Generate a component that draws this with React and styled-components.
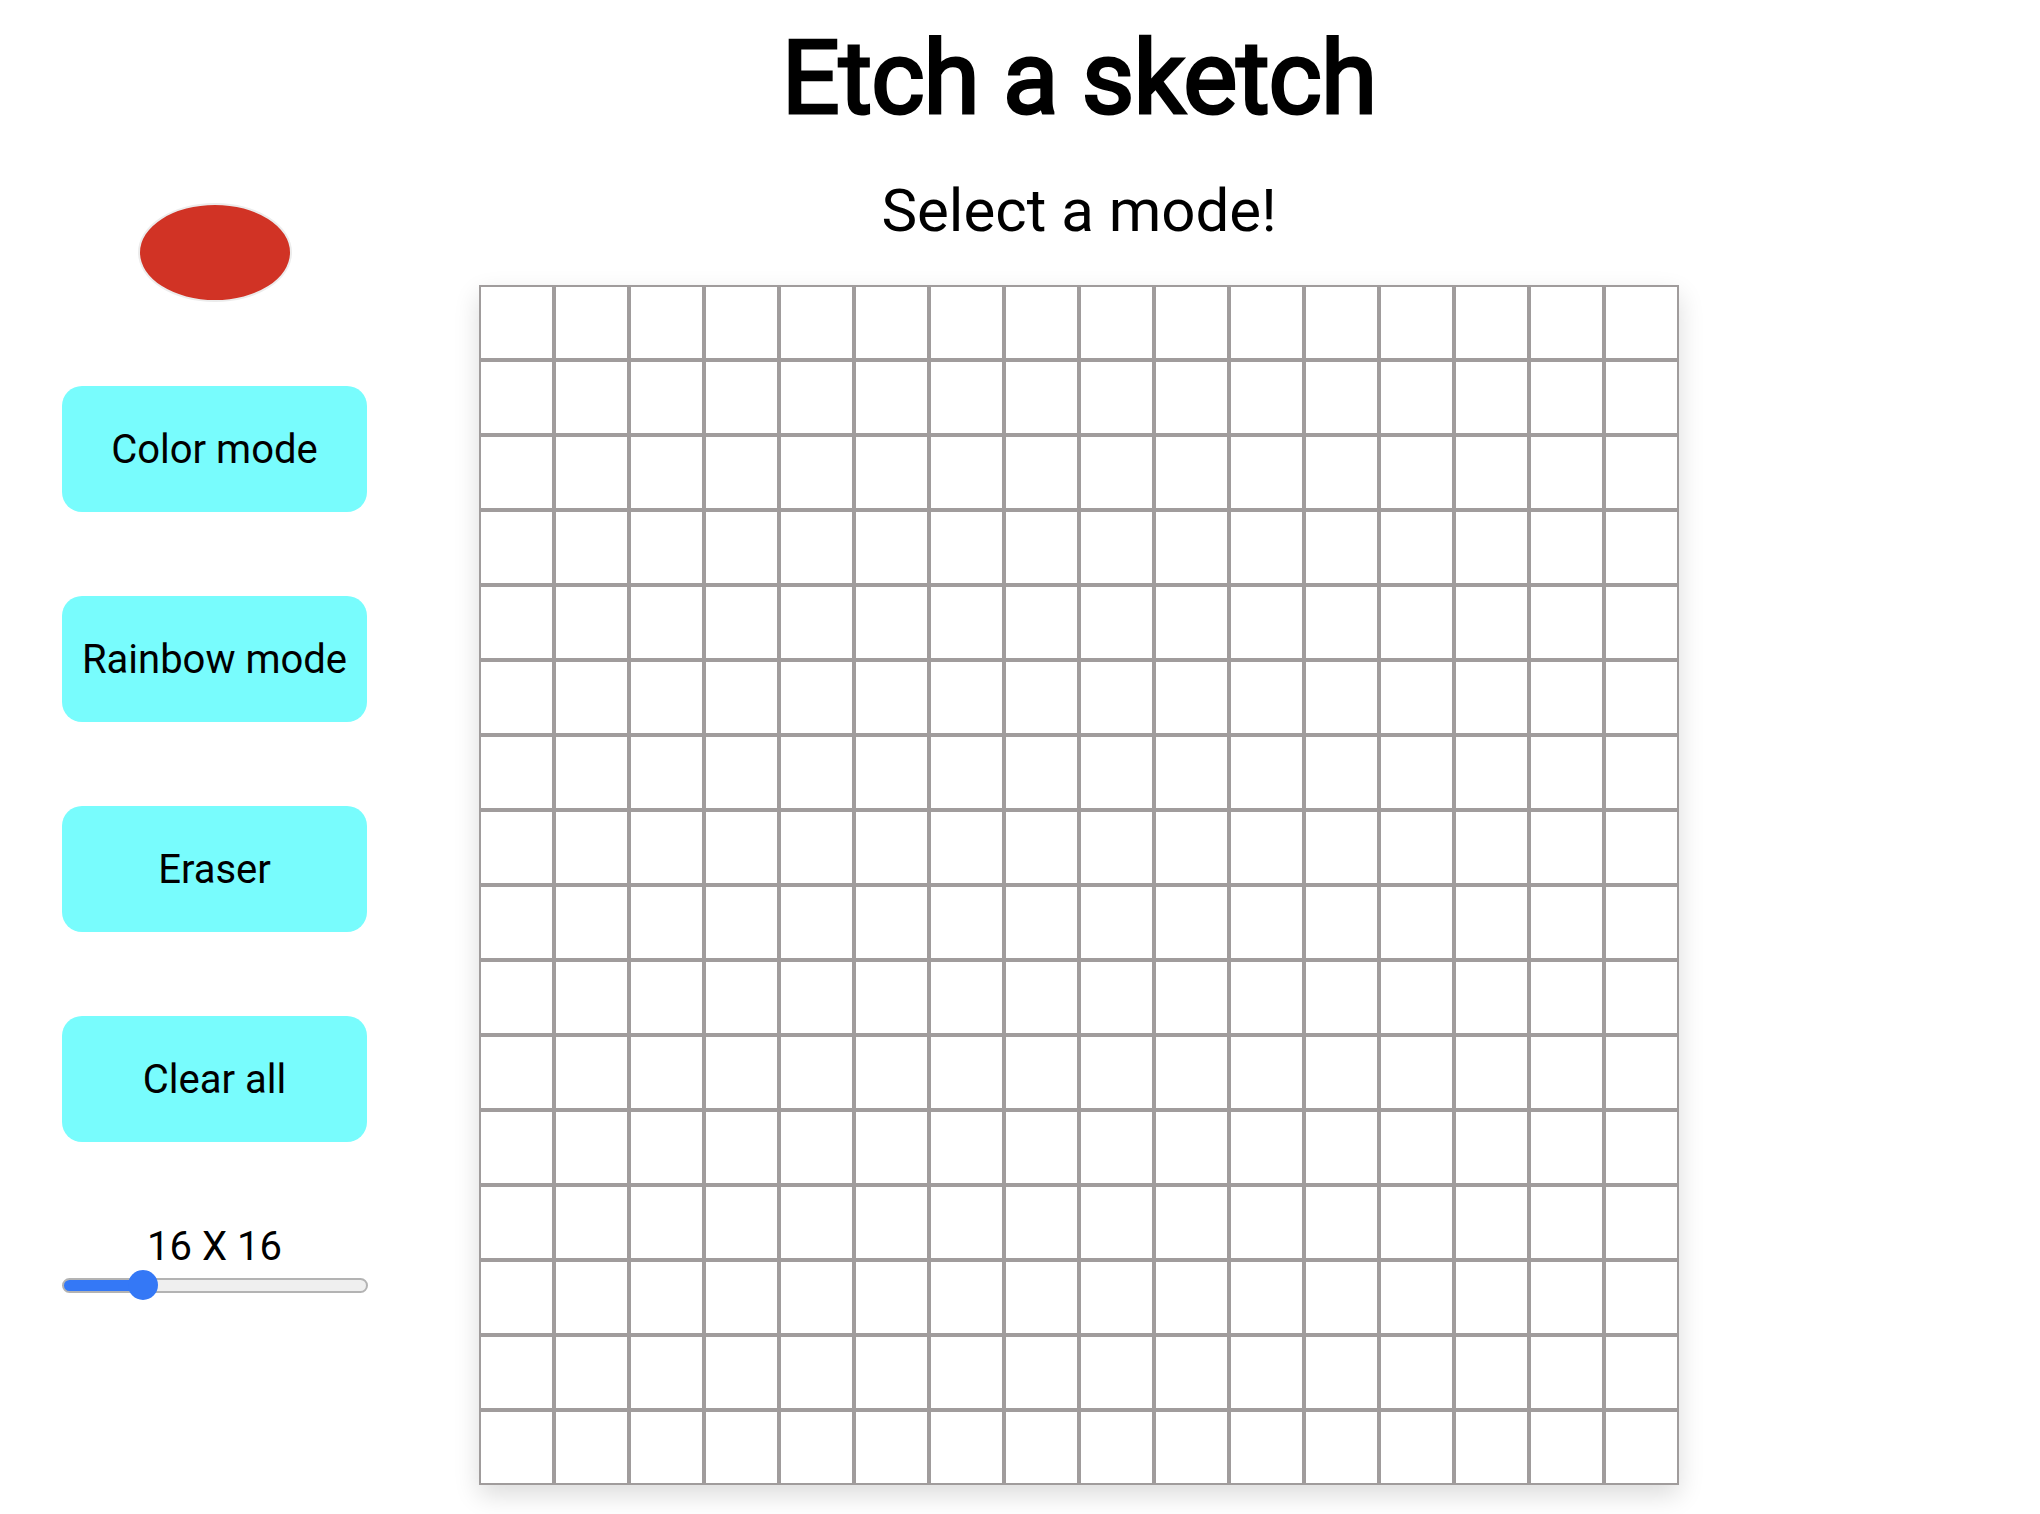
import React, { useState } from 'react';
import styled, { createGlobalStyle } from 'styled-components';

const GlobalStyle = createGlobalStyle`
  html, body {
    margin: 0;
    padding: 0;
    background: #ffffff;
    font-family: Roboto, "Liberation Sans", sans-serif;
    color: #000;
  }
`;

const Page = styled.div`
  width: 2040px;
  min-height: 1514px;
  box-sizing: border-box;
  display: flex;
  align-items: flex-start;
  gap: 112px;
  padding-left: 62px;
`;

const Sidebar = styled.aside`
  width: 305px;
  display: flex;
  flex-direction: column;
  align-items: center;
  gap: 84px;
  padding-top: 203px;
`;

const ColorDot = styled.div`
  width: 154px;
  height: 99px;
  box-sizing: border-box;
  border-radius: 50%;
  border: 2px solid #ececec;
  background: ${(p) => p.color};
`;

const ModeButton = styled.button`
  width: 305px;
  height: 126px;
  border: none;
  border-radius: 20px;
  background: #78fcfd;
  font-family: Roboto, "Liberation Sans", sans-serif;
  font-size: 40px;
  color: #000;
  cursor: pointer;
`;

const SizeControl = styled.div`
  width: 305px;
  display: flex;
  flex-direction: column;
  align-items: center;
  margin-top: -3px;
`;

const SizeLabel = styled.div`
  font-size: 40px;
  line-height: normal;
`;

const Slider = styled.input`
  -webkit-appearance: none;
  appearance: none;
  width: 306px;
  height: 30px;
  margin: 0;
  background: transparent;

  &::-webkit-slider-runnable-track {
    height: 15px;
    box-sizing: border-box;
    border-radius: 8px;
    border: 2px solid #b3b3b3;
    background: linear-gradient(
      to right,
      #3478f6 0,
      #3478f6 ${(p) => p.$fill}px,
      #efefef ${(p) => p.$fill}px
    );
  }

  &::-webkit-slider-thumb {
    -webkit-appearance: none;
    width: 30px;
    height: 30px;
    margin-top: -9.5px;
    border-radius: 50%;
    background: #3478f6;
    border: none;
  }
`;

const Board = styled.section`
  width: 1200px;
  display: flex;
  flex-direction: column;
  align-items: center;
`;

const Title = styled.h1`
  margin: 18px 0 0;
  font-size: 102px;
  font-weight: 400;
  line-height: normal;
  letter-spacing: -1px;
  -webkit-text-stroke: 3px #000;
  white-space: nowrap;
`;

const Subtitle = styled.h2`
  margin: 37px 0 39px;
  font-size: 60px;
  font-weight: 400;
  line-height: normal;
`;

const Grid = styled.div`
  display: grid;
  grid-template-columns: repeat(${(p) => p.size}, 1fr);
  width: 1200px;
  height: 1200px;
  box-shadow: 0 10px 24px rgba(0, 0, 0, 0.14);
`;

const Cell = styled.div`
  box-sizing: border-box;
  border: 2px solid #a09c9c;
  background: #fff;
`;

const App = () => {
  const [size, setSize] = useState(16);
  const ratio = (size - 1) / 63;
  const fill = 15 + ratio * 276;

  return (
    <Page>
      <GlobalStyle />
      <Sidebar>
        <ColorDot color="#d13325" />
        <ModeButton>Color mode</ModeButton>
        <ModeButton>Rainbow mode</ModeButton>
        <ModeButton>Eraser</ModeButton>
        <ModeButton>Clear all</ModeButton>
        <SizeControl>
          <SizeLabel>
            {size} X {size}
          </SizeLabel>
          <Slider
            type="range"
            min="1"
            max="64"
            value={size}
            $fill={fill}
            onChange={(e) => setSize(Number(e.target.value))}
          />
        </SizeControl>
      </Sidebar>
      <Board>
        <Title>Etch a sketch</Title>
        <Subtitle>Select a mode!</Subtitle>
        <Grid size={size}>
          {Array.from({ length: size * size }).map((_, i) => (
            <Cell key={i} />
          ))}
        </Grid>
      </Board>
    </Page>
  );
};

export default App;
